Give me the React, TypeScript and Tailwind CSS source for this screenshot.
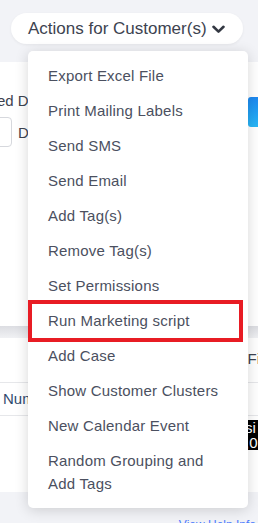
import React from "react";

const items = [
  "Export Excel File",
  "Print Mailing Labels",
  "Send SMS",
  "Send Email",
  "Add Tag(s)",
  "Remove Tag(s)",
  "Set Permissions",
  "Run Marketing script",
  "Add Case",
  "Show Customer Clusters",
  "New Calendar Event",
  "Random Grouping and Add Tags",
];

export default function App() {
  return (
    <div
      className="relative flex flex-col w-[258px] h-[523px] overflow-hidden bg-[#f2f3f7]"
      style={{ fontFamily: '"Liberation Sans", Arial, sans-serif' }}
    >
      {/* header */}
      <div className="flex h-[62px] shrink-0 pl-[11px] pt-[13px]">
        <button className="flex items-center h-[31px] w-[232px] rounded-full bg-white pl-[17px] shadow-[0_1px_3px_rgba(0,0,0,0.06)] text-[17px] leading-[20px] text-[#3d4350]">
          <span>Actions for Customer(s)</span>
          <svg width="13" height="9" viewBox="0 0 13 9" className="ml-[5px] mt-[1px]">
            <path
              d="M1.5 1.8 L6.5 6.6 L11.5 1.8"
              fill="none"
              stroke="#333842"
              strokeWidth="2.6"
              strokeLinecap="round"
              strokeLinejoin="round"
            />
          </svg>
        </button>
      </div>

      {/* upper white panel */}
      <div className="flex flex-col h-[264px] shrink-0 bg-white overflow-hidden pt-[30px]">
        <div className="flex items-start justify-between h-[25px]">
          <span className="-ml-[3px] text-[15px] leading-[17px] text-[#3d4350] whitespace-nowrap">
            ed Date
          </span>
          <span className="mt-[5px] -mr-[30px] w-[40px] h-[30px] rounded-[3px] bg-gradient-to-b from-[#1e88f0] to-[#29b6f6]" />
        </div>
        <div className="flex items-center gap-[6px]">
          <span className="-ml-[20px] w-[32px] h-[30px] rounded-[4px] border border-[#d6d8dd] bg-white" />
          <span className="text-[15px] leading-[17px] text-[#3d4350]">Date</span>
        </div>
      </div>

      {/* gap shadow */}
      <div className="h-[12px] shrink-0 bg-gradient-to-b from-[#dcdde2] to-[#f0f1f4]" />

      {/* lower white panel */}
      <div className="flex flex-col h-[154px] shrink-0 bg-white overflow-hidden">
        <div className="flex items-center justify-end h-[45px] border-b border-[#e6e7ea] pb-[2px]">
          <span className="-mr-[22px] text-[15px] text-[#3d4350]">Field</span>
        </div>
        <div className="flex items-center h-[33px] border-b border-[#e6e7ea] pl-[3px]">
          <span className="text-[15px] text-[#2f4a6e] whitespace-nowrap">Number</span>
        </div>
        <div className="flex justify-end pt-[4px]">
          <div className="-mr-[8px] w-[21px] bg-black text-white text-[15px] leading-[15px]">
            <div>si</div>
            <div>,0</div>
          </div>
        </div>
      </div>

      {/* bottom */}
      <div className="flex justify-end flex-1 pt-[26px] pr-[2px]">
        <span className="text-[12px] leading-[14px] text-[#4d7cfe] whitespace-nowrap">
          View Help Info
        </span>
      </div>

      {/* dropdown menu */}
      <div className="absolute left-[28px] top-[51px] w-[220px] rounded-[5px] bg-white py-[7px] shadow-[0_2px_14px_rgba(0,0,0,0.16)]">
        {items.map((t) => (
          <div
            key={t}
            className="px-[20px] py-[6px] text-[15px] leading-[23px] tracking-[0.2px] text-[#4b5060]"
          >
            {t}
          </div>
        ))}
      </div>

      {/* highlight box */}
      <div className="absolute left-[28px] top-[300px] w-[215px] h-[42px] border-[4px] border-[#e81c24]" />
    </div>
  );
}
